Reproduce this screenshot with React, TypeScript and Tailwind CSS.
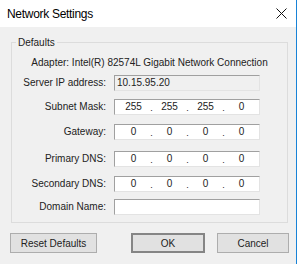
const font = { fontFamily: '"Liberation Sans", Arial, sans-serif' };

type Row = { label: string; value?: string[]; text?: string; readOnly?: boolean; mt: string };

const rows: Row[] = [
  { label: "Server IP address:", text: "10.15.95.20", readOnly: true, mt: "mt-0" },
  { label: "Subnet Mask:", value: ["255", "255", "255", "0"], mt: "mt-[8px]" },
  { label: "Gateway:", value: ["0", "0", "0", "0"], mt: "mt-[9px]" },
  { label: "Primary DNS:", value: ["0", "0", "0", "0"], mt: "mt-[11px]" },
  { label: "Secondary DNS:", value: ["0", "0", "0", "0"], mt: "mt-[9px]" },
  { label: "Domain Name:", text: "", mt: "mt-[7px]" },
];

function Field({ row }: { row: Row }) {
  const base =
    "w-[146px] h-[16px] border-t border-l border-t-[#a0a0a0] border-l-[#a0a0a0] border-b border-r border-b-[#e3e3e3] border-r-[#e3e3e3] flex items-center";
  if (row.value) {
    return (
      <div className={`${base} bg-white pl-[2px]`}>
        {row.value.map((v, i) => (
          <div key={i} className="flex items-center">
            <span className="w-[33px] text-center">{v}</span>
            {i < 3 && <span className="w-[3px] text-center text-[9px] translate-y-[1px]">.</span>}
          </div>
        ))}
      </div>
    );
  }
  return (
    <div className={`${base} ${row.readOnly ? "bg-[#f0f0f0]" : "bg-white"} pl-[2px]`}>{row.text}</div>
  );
}

export default function App() {
  return (
    <div className="w-[300px] h-[264px] bg-white text-[10px] text-[#222]" style={font}>
      <div className="w-[297px] h-full border-r border-[#1883d7] flex flex-col">
        {/* Title bar */}
        <div className="h-[27px] bg-white flex items-center justify-between pl-[7px] pr-[8px] shrink-0">
          <span className="text-[12px] text-black tracking-[-0.3px]">Network Settings</span>
          <svg width="11" height="11" viewBox="0 0 11 11" className="mr-[1px]">
            <path d="M0.5 0.5 L10.5 10.5 M10.5 0.5 L0.5 10.5" stroke="#111" strokeWidth="1" />
          </svg>
        </div>

        {/* Body */}
        <div className="flex-1 bg-[#f0f0f0] pt-[9px]">
          <fieldset className="mx-[11px] w-[277px] border border-[#dcdcdc] pb-[7px]">
            <legend className="ml-[4px] px-[2px] leading-[13px]">Defaults</legend>
            <div className="text-center mt-[7px] leading-[13px]">
              Adapter: Intel(R) 82574L Gigabit Network Connection
            </div>
            <div className="flex flex-col mt-[6px]">
              {rows.map((r) => (
                <div key={r.label} className={`flex items-center h-[16px] leading-[16px] ${r.mt}`}>
                  <span className="w-[94px] text-right">{r.label}</span>
                  <div className="ml-[8px]">
                    <Field row={r} />
                  </div>
                </div>
              ))}
            </div>
          </fieldset>

          <div className="flex mt-[10px]">
            <button className="ml-[10px] w-[87px] h-[20px] bg-[#e1e1e1] border border-[#adadad]">
              Reset Defaults
            </button>
            <button className="ml-[34px] w-[74px] h-[20px] bg-[#e1e1e1] border-2 border-[#858585]">
              OK
            </button>
            <button className="ml-[12px] w-[72px] h-[20px] bg-[#e1e1e1] border border-[#adadad]">
              Cancel
            </button>
          </div>
        </div>
      </div>
    </div>
  );
}
